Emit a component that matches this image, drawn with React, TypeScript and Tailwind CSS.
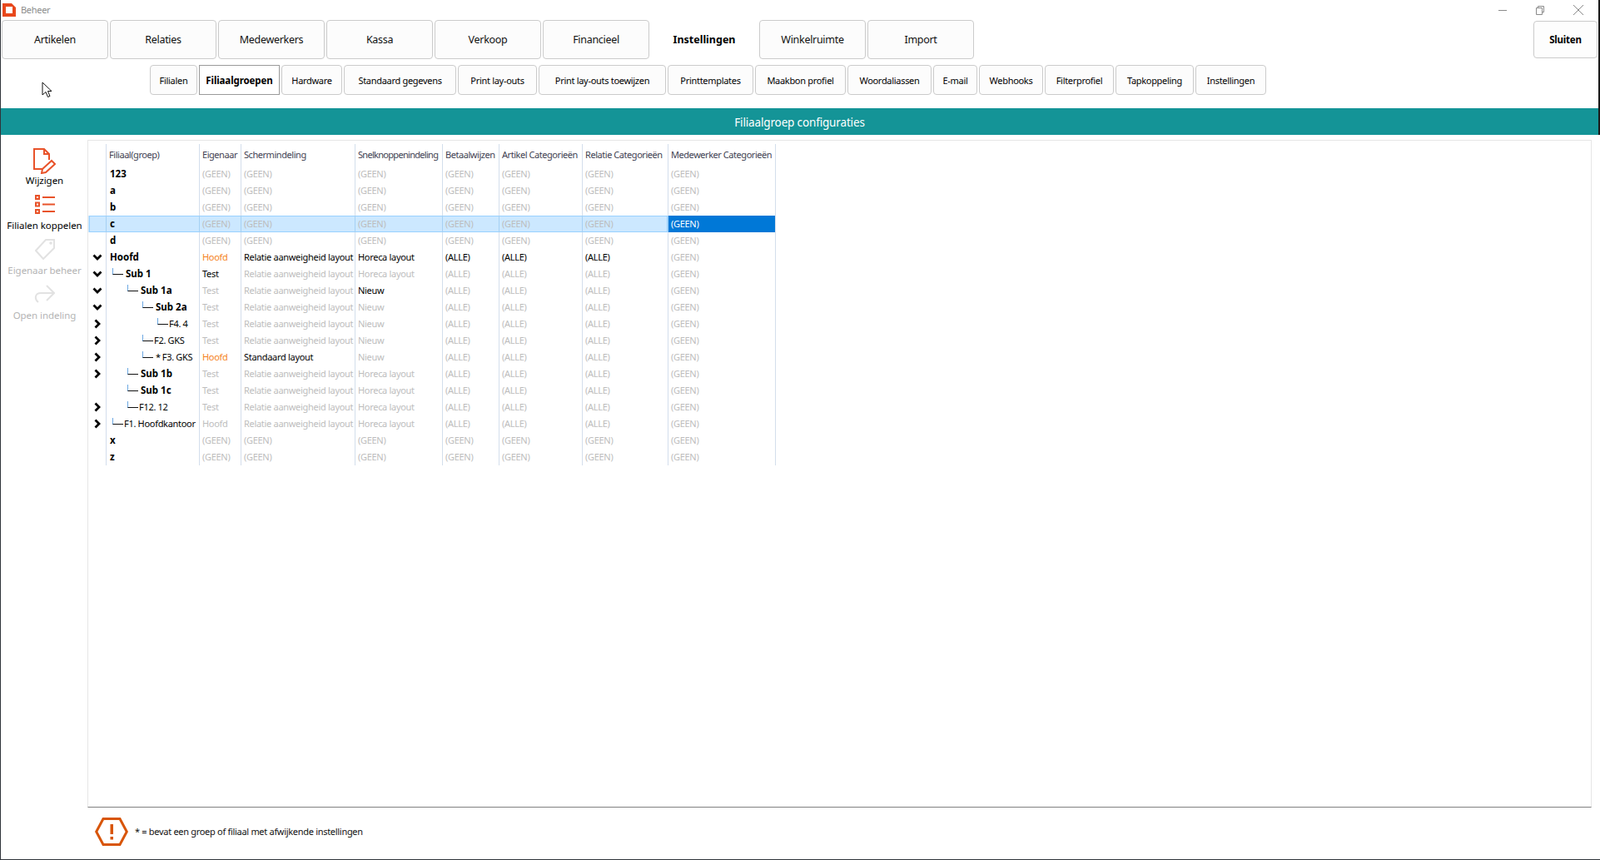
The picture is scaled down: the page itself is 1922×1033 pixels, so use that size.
import React from 'react';

const mainTabs = ['Artikelen', 'Relaties', 'Medewerkers', 'Kassa', 'Verkoop', 'Financieel', 'Instellingen', 'Winkelruimte', 'Import'];

const subTabs = [
  { label: 'Filialen', w: 'w-[57px]' },
  { label: 'Filiaalgroepen', w: 'w-[97px]', active: true },
  { label: 'Hardware', w: 'w-[73px]' },
  { label: 'Standaard gegevens', w: 'w-[135px]' },
  { label: 'Print lay-outs', w: 'w-[95px]' },
  { label: 'Print lay-outs toewijzen', w: 'w-[153px]' },
  { label: 'Printtemplates', w: 'w-[103px]' },
  { label: 'Maakbon profiel', w: 'w-[109px]' },
  { label: 'Woordaliassen', w: 'w-[101px]' },
  { label: 'E-mail', w: 'w-[53px]' },
  { label: 'Webhooks', w: 'w-[77px]' },
  { label: 'Filterprofiel', w: 'w-[83px]' },
  { label: 'Tapkoppeling', w: 'w-[94px]' },
  { label: 'Instellingen', w: 'w-[85px]' },
];

const headers = ['Filiaal(groep)', 'Eigenaar', 'Schermindeling', 'Snelknoppenindeling', 'Betaalwijzen', 'Artikel Categorieën', 'Relatie Categorieën', 'Medewerker Categorieën'];

// breedte per kolom, eerste kolom is de boom
const colWidths = ['w-[112px]', 'w-[50px]', 'w-[137px]', 'w-[105px]', 'w-[68px]', 'w-[100px]', 'w-[103px]', 'w-[130px]'];

type Val = { t: string; on?: boolean; orange?: boolean };

type Row = {
  name: string;
  bold?: boolean;
  level?: number;
  star?: boolean;
  chevron?: 'down' | 'right';
  cells: Val[];
  selected?: boolean;
};

const g = (t: string): Val => ({ t });
const b = (t: string): Val => ({ t, on: true });
const GEEN = g('(GEEN)');
const ALLE = g('(ALLE)');
const RAL = g('Relatie aanweigheid layout');
const HOR = g('Horeca layout');
const NIEUW = g('Nieuw');
const TEST = g('Test');

const leeg = [GEEN, GEEN, GEEN, GEEN, GEEN, GEEN, GEEN];

const rows: Row[] = [
  { name: '123', bold: true, cells: leeg },
  { name: 'a', bold: true, cells: leeg },
  { name: 'b', bold: true, cells: leeg },
  { name: 'c', bold: true, cells: leeg, selected: true },
  { name: 'd', bold: true, cells: leeg },
  { name: 'Hoofd', bold: true, chevron: 'down', cells: [{ t: 'Hoofd', orange: true }, b('Relatie aanweigheid layout'), b('Horeca layout'), b('(ALLE)'), b('(ALLE)'), b('(ALLE)'), GEEN] },
  { name: 'Sub 1', bold: true, level: 1, chevron: 'down', cells: [b('Test'), RAL, HOR, ALLE, ALLE, ALLE, GEEN] },
  { name: 'Sub 1a', bold: true, level: 2, chevron: 'down', cells: [TEST, RAL, b('Nieuw'), ALLE, ALLE, ALLE, GEEN] },
  { name: 'Sub 2a', bold: true, level: 3, chevron: 'down', cells: [TEST, RAL, NIEUW, ALLE, ALLE, ALLE, GEEN] },
  { name: 'F4. 4', level: 4, chevron: 'right', cells: [TEST, RAL, NIEUW, ALLE, ALLE, ALLE, GEEN] },
  { name: 'F2. GKS', level: 3, chevron: 'right', cells: [TEST, RAL, NIEUW, ALLE, ALLE, ALLE, GEEN] },
  { name: 'F3. GKS', level: 3, star: true, chevron: 'right', cells: [{ t: 'Hoofd', orange: true }, b('Standaard layout'), NIEUW, ALLE, ALLE, ALLE, GEEN] },
  { name: 'Sub 1b', bold: true, level: 2, chevron: 'right', cells: [TEST, RAL, HOR, ALLE, ALLE, ALLE, GEEN] },
  { name: 'Sub 1c', bold: true, level: 2, cells: [TEST, RAL, HOR, ALLE, ALLE, ALLE, GEEN] },
  { name: 'F12. 12', level: 2, chevron: 'right', cells: [TEST, RAL, HOR, ALLE, ALLE, ALLE, GEEN] },
  { name: 'F1. Hoofdkantoor', level: 1, chevron: 'right', cells: [g('Hoofd'), RAL, HOR, ALLE, ALLE, ALLE, GEEN] },
  { name: 'x', bold: true, cells: leeg },
  { name: 'z', bold: true, cells: leeg },
];

const levelIndent: Record<number, string> = {
  1: 'ml-[7px]',
  2: 'ml-[25px]',
  3: 'ml-[43px]',
  4: 'ml-[61px]',
};

const Chevron: React.FC<{ dir: 'down' | 'right' }> = ({ dir }) => (
  <svg width="12" height="12" viewBox="0 0 12 12" fill="none" stroke="#000" strokeWidth="2.8">
    {dir === 'down' ? <path d="M1.5 3.5L6 8l4.5-4.5" /> : <path d="M3.5 1.5L8 6l-4.5 4.5" />}
  </svg>
);

const TreeRow: React.FC<{ row: Row }> = ({ row }) => {
  const lines = row.selected ? 'border-[#a5d0f3]' : 'border-[#d3deec]';
  return (
    <div className={`relative flex h-5 ${row.selected ? 'bg-[#cce8ff]' : ''}`}>
      {row.selected && <div className="absolute inset-y-0 left-[1px] right-[130px] border border-[#99d1ff]" />}
      <div className="flex w-[21px] shrink-0 items-center justify-center pl-[1px]">
        {row.chevron && <Chevron dir={row.chevron} />}
      </div>
      <div className={`relative flex ${colWidths[0]} shrink-0 items-center border-l ${lines} ${row.bold ? "font-['Noto_Sans',sans-serif] text-[11.5px] font-bold tracking-normal" : ''} text-black whitespace-nowrap`}>
        {row.level ? (
          <>
            <span className={`${levelIndent[row.level]} mb-[7px] h-[8px] w-[13px] shrink-0 border-b border-l border-b-[#111] border-l-[#6ba7e2]`} />
            {row.star && <span className="ml-[3px] mr-[1px]">*</span>}
            <span className={row.bold ? 'ml-[3px]' : 'ml-[1px]'}>{row.name}</span>
          </>
        ) : (
          <span className="ml-[4px]">{row.name}</span>
        )}
      </div>
      {row.cells.map((c, i) => {
        const cur = row.selected && i === 6;
        const color = cur ? 'text-white' : c.orange ? 'text-[#f58220]' : c.on ? 'text-black' : 'text-[#bdbdbd]';
        return (
          <div
            key={i}
            className={`relative flex ${colWidths[i + 1]} shrink-0 items-center overflow-hidden whitespace-nowrap border-l pl-[3px] ${color} ${lines} ${cur ? 'bg-[#0078d7]' : ''} ${i === 6 ? 'border-r border-r-[#d3deec]' : ''}`}
          >
            {c.t}
          </div>
        );
      })}
    </div>
  );
};

const SideButton: React.FC<{ label: string; disabled?: boolean; icon: React.ReactNode }> = ({ label, disabled, icon }) => (
  <div className={`flex h-[54px] flex-col items-center ${disabled ? 'text-[#b4b4b4]' : 'text-black'}`}>
    <div className="flex h-[32px] items-center justify-center">{icon}</div>
    <div className="flex h-[16px] items-center whitespace-nowrap text-[11.5px] tracking-[-0.05px]">{label}</div>
  </div>
);

export default function App() {
  return (
    <div className="relative flex h-[1033px] w-[1922px] flex-col overflow-hidden border-b border-l border-[#30343a] bg-white font-['Roboto',sans-serif] text-[11px] tracking-[-0.3px]">
      {/* bovenste deel van het venster */}
      <div className="flex flex-col border-r-[2px] border-[#1a1a1a]">
        <div className="flex h-6 items-center">
          <svg width="16" height="16" viewBox="0 0 16 16" className="ml-[2px]">
            <path d="M0 0h11l5 5v11H0z" fill="#e8481c" />
            <rect x="4" y="4" width="8" height="8" fill="#fff" />
          </svg>
          <span className="ml-[6px] text-[#8c8c8c]">Beheer</span>
          <div className="ml-auto flex items-center text-[#8a8a8a]">
            <svg width="12" height="12" viewBox="0 0 12 12" className="mr-[33px]"><path d="M1 6.5h10" stroke="currentColor" /></svg>
            <svg width="12" height="12" viewBox="0 0 12 12" className="mr-[33px]"><path d="M1.5 3.5h7v8h-7zM3.5 3.5v-2h7v7h-2" fill="none" stroke="currentColor" /></svg>
            <svg width="14" height="14" viewBox="0 0 14 14" className="mr-[17px]"><path d="M1 1l12 12M13 1L1 13" stroke="currentColor" /></svg>
          </div>
        </div>

        <div className="flex items-start pl-[1px]">
          <div className="flex gap-[2px]">
            {mainTabs.map((t) =>
              t === 'Instellingen' ? (
                <div key={t} className="flex h-[47px] w-[128px] items-center justify-center pt-[1px] font-['Noto_Sans',sans-serif] text-[12.5px] font-bold tracking-normal text-black">
                  {t}
                </div>
              ) : (
                <div key={t} className="flex h-[47px] w-[128px] items-center justify-center rounded-[4px] border border-[#cbcbcb] bg-[#fcfcfc] pt-[2px] text-[12.5px] text-[#111]">
                  {t}
                </div>
              ),
            )}
          </div>
          <div className="ml-auto mr-[1px] mt-[1px] flex h-[45px] w-[77px] items-center justify-center rounded-[4px] border border-[#cbcbcb] bg-[#fdfdfd] pt-[1px] font-['Noto_Sans',sans-serif] text-[11.5px] font-bold tracking-[-0.2px] text-black">
            Sluiten
          </div>
        </div>

        <div className="mt-[7px] flex gap-[2px] pl-[179px]">
          {subTabs.map((t) => (
            <div
              key={t.label}
              className={`flex h-[36px] ${t.w} items-center justify-center pt-[2px] text-black ${
                t.active ? "border border-[#9a9a9a] bg-white font-['Noto_Sans',sans-serif] text-[11.5px] font-bold tracking-[-0.1px]" : 'rounded-[4px] border border-[#cbcbcb] bg-[#fcfcfc]'
              }`}
            >
              {t.label}
            </div>
          ))}
        </div>

        <div className="mt-[16px] flex h-8 items-center justify-center bg-[#149497] pt-[2px] text-[13.5px] tracking-[-0.15px] text-white">Filiaalgroep configuraties</div>
      </div>

      <div className="flex flex-1">
        <div className="w-[104px] shrink-0 pl-[1px] pt-[15px]">
          <SideButton
            label="Wijzigen"
            icon={
              <svg width="27" height="31" viewBox="0 0 27 31" fill="none" stroke="#e8532a" strokeWidth="2">
                <path d="M11 25H1V1h12l6 6v7" />
                <path d="M13 1v6h6" />
                <path d="M22 15l4 4-11 10-5 1 1-5z" />
              </svg>
            }
          />
          <SideButton
            label="Filialen koppelen"
            icon={
              <svg width="24" height="23" viewBox="0 0 24 23" fill="none" stroke="#e8532a" strokeWidth="2" className="mb-[3px]">
                <rect x="1" y="1" width="4" height="4" />
                <rect x="1" y="9.5" width="4" height="4" />
                <rect x="1" y="18" width="4" height="4" />
                <path d="M9 3h15M9 11.5h15M9 20h15" />
              </svg>
            }
          />
          <SideButton
            disabled
            label="Eigenaar beheer"
            icon={
              <svg width="24" height="25" viewBox="0 0 24 25" fill="none" stroke="#e2e2e2" strokeWidth="2" className="mb-[3px]">
                <path d="M23 1H13L1 14l9 10 13-13z" />
                <circle cx="19" cy="5" r="0.8" />
              </svg>
            }
          />
          <SideButton
            disabled
            label="Open indeling"
            icon={
              <svg width="25" height="22" viewBox="0 0 25 22" fill="none" stroke="#e2e2e2" strokeWidth="2" className="mb-[4px]">
                <path d="M5 21C0 17 1 10 8 10h16M15 1l9 9-9 9" />
              </svg>
            }
          />
        </div>

        <div className="flex w-[1807px] flex-col">
          <div className="mt-[6px] h-[802px] border-x border-b border-t border-[#e6e6e6] border-b-[#808080] pt-[1px]">
            <div className="w-fit">
              <div className="flex h-[29px] pt-[3px] tracking-[-0.45px] text-[#3f3f52]">
                <div className="w-[21px] shrink-0" />
                {headers.map((h, i) => (
                  <div
                    key={h}
                    className={`flex ${colWidths[i]} shrink-0 items-center whitespace-nowrap border-l border-[#d3deec] pl-[3px] ${i === 3 ? 'tracking-[-0.7px]' : ''} ${i === 7 ? 'border-r' : ''}`}
                  >
                    {h}
                  </div>
                ))}
              </div>
              {rows.map((r) => (
                <TreeRow key={r.name} row={r} />
              ))}
            </div>
          </div>

          <div className="flex h-[58px] items-center gap-[8px] pl-[9px] text-[#111]">
            <svg width="40" height="34" viewBox="0 0 40 34" fill="none">
              <path d="M1.7 17L10 1.5h20L38.3 17 30 32.5H10z" stroke="#d85508" strokeWidth="3" />
              <rect x="18.5" y="8" width="3.5" height="12" fill="#d85508" />
              <rect x="18.5" y="23" width="3.5" height="3.5" fill="#d85508" />
            </svg>
            <span>* = bevat een groep of filiaal met afwijkende instellingen</span>
          </div>
        </div>
      </div>

      {/* muisaanwijzer */}
      <svg width="13" height="20" viewBox="0 0 13 20" className="absolute left-[49px] top-[98px]">
        <path d="M1 1v15l4-3.5 2.5 6 2.5-1-2.5-6H12z" fill="#fff" stroke="#111" strokeWidth="1" />
      </svg>
    </div>
  );
}
